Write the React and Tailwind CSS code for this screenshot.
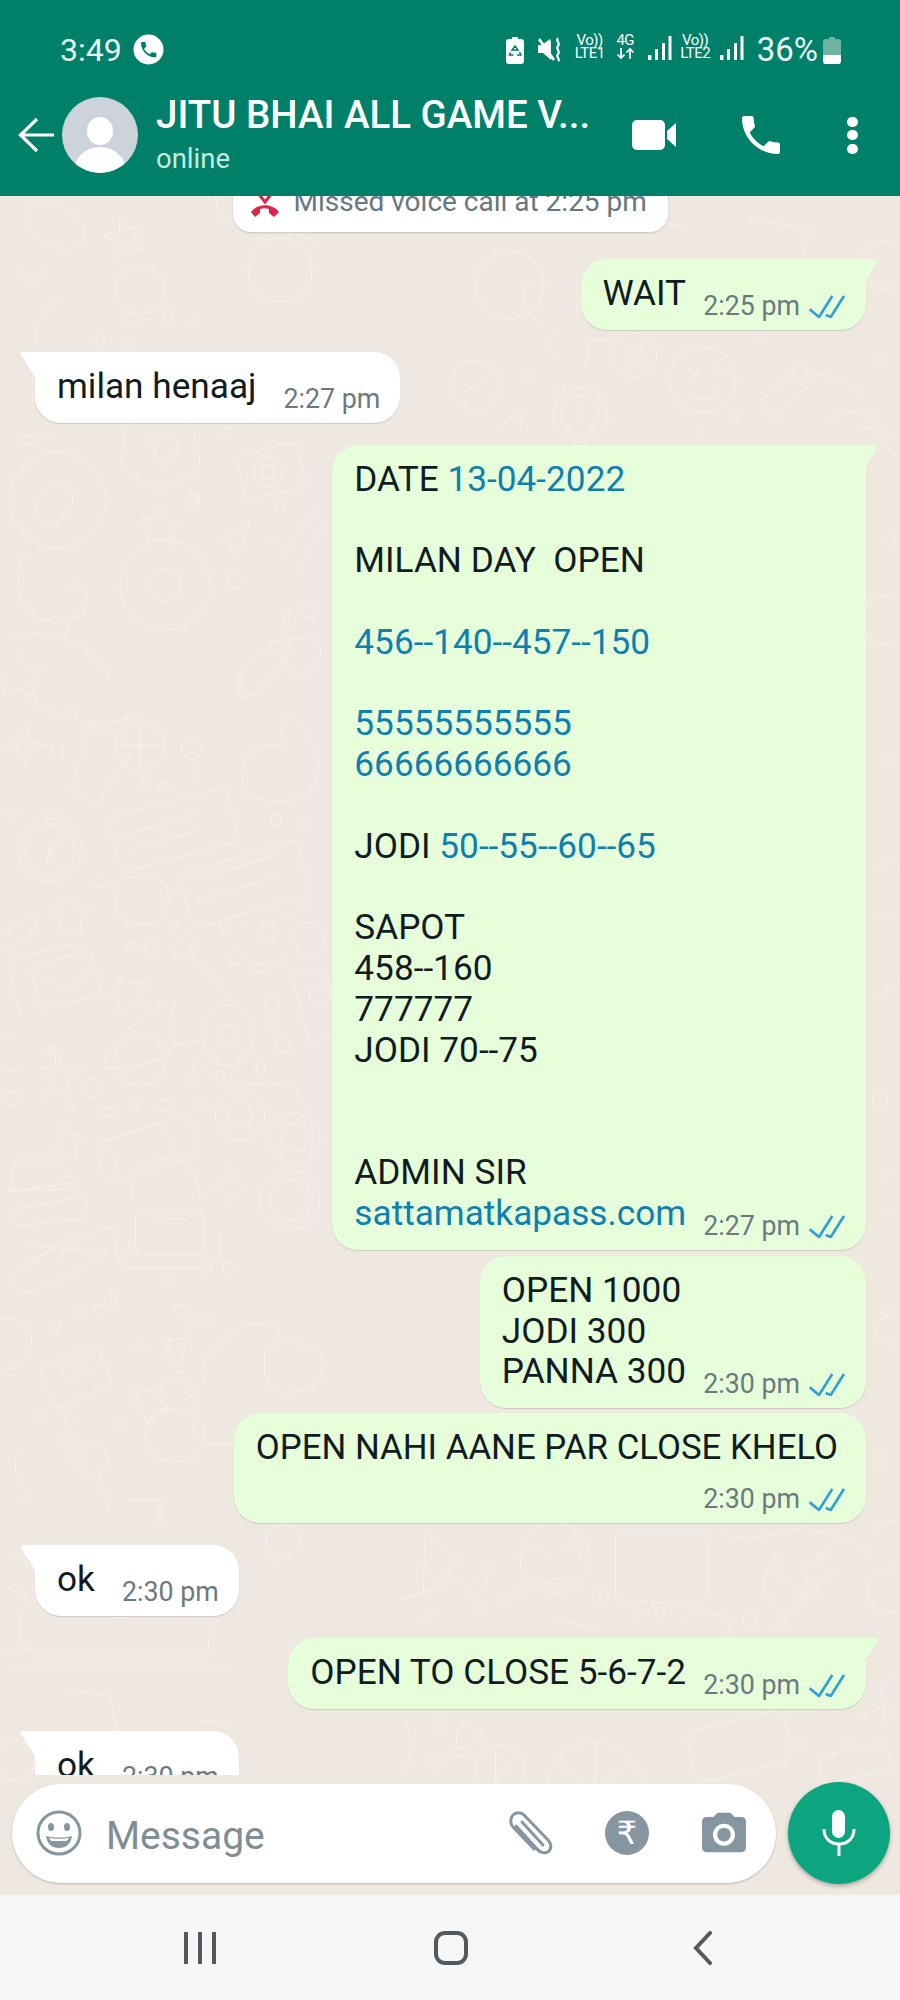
import React from "react";

const Link = ({ children }) => <span className="text-[#0f7fb0]">{children}</span>;

function Checks() {
  return (
    <svg width="37" height="24" viewBox="0 0 37 24" fill="none" stroke="#2f9fd8" strokeWidth="2.6" className="ml-[9px] shrink-0">
      <path d="M.7 15.3 10 23 23.3 2" />
      <path d="M16.7 21l5 2L35 2" />
    </svg>
  );
}

function Time({ t, out }) {
  return (
    <div className="flex h-[30px] items-center shrink-0 text-[26.800px] leading-[30px] text-[#6c7a7f] whitespace-nowrap">
      <span>{t}</span>
      {out && <Checks />}
    </div>
  );
}

function Bubble({ out, tail, time, stacked, className = "", children }) {
  const bg = out ? "bg-[#e6ffda]" : "bg-white";
  const corner = tail ? (out ? "rounded-tr-none" : "rounded-tl-none") : "";
  const side = out ? "self-end mr-[34px]" : "self-start ml-[35px]";
  const gap = out ? "mr-[17px]" : "mr-[27px]";
  return (
    <div className={`relative shrink-0 rounded-[26px] ${corner} ${bg} ${side} pl-[22px] pr-[20px] pt-[14px] pb-[9px] shadow-[0_1px_1px_rgba(0,0,0,0.14)] ${className}`}>
      {tail && (
        <svg width="15" height="25" viewBox="0 0 15 25" className={`absolute top-0 ${out ? "right-[-13px]" : "left-[-15px]"}`}>
          {out ? (
            <path d="M0 0H11c2 0 3 1.500 2 3L0 25Z" fill="#e6ffda" />
          ) : (
            <path d="M15 0H3C1 0-.5 1.500 1 3L15 25Z" fill="#fff" />
          )}
        </svg>
      )}
      {stacked ? (
        <div className="flex flex-col">
          <div className="mr-[8px] whitespace-pre text-[34.800px] leading-[40.8px] text-[#111b21]">{children}</div>
          <div className="mt-[16px] self-end"><Time t={time} out={out} /></div>
        </div>
      ) : (
        <div className="flex items-end">
          <div className={`${gap} pb-[7px] whitespace-pre text-[35.200px] leading-[40.8px] text-[#111b21]`}>{children}</div>
          <Time t={time} out={out} />
        </div>
      )}
    </div>
  );
}

function Doodles() {
  const dots = [
    [71,714,6],[58,752,6],[145,785,5],[164,787,5],[12,815,5],[276,820,6],[305,822,6],[100,882,5],[173,925,5],[132,947,5],[152,947,6],[225,925,5],[243,925,2],[268,932,10],[307,902,5],[290,915,3],
    [235,958,7],[260,968,5],[282,963,4],[272,1006,8],[270,1025,4],[283,1045,8],[198,1068,5],[220,1076,5],[192,1082,5],[261,1068,5],[12,1098,7],[91,1088,9],[108,1112,5],[134,1105,5],[165,1105,6],[200,1102,6],
    [132,1250,6],[110,1300,6],[55,1325,5],[83,1312,5],[100,1310,5],[180,1310,5],[140,1345,5],[207,1268,5],[229,1268,6],[171,1280,4],[190,1323,5],[208,1322,5],[180,1378,6],[190,1390,5],[42,1418,5],[70,1420,5],[122,1422,6],[67,1440,8],[82,1455,6],
    [130,320,7],[168,316,5],[195,323,4],[100,340,5],[130,345,4],[227,432,5],[28,440,5],[50,437,3],[192,500,6],[195,498,5],[280,507,5],[290,620,6],[270,540,4],[235,580,8],[275,646,6],[310,610,8],
    [50,1050,3],[482,1580,5],[490,1570,5],[520,1590,4],[480,1608,6],[505,1600,4],[600,1596,8],[660,1612,5],[778,1560,5],[820,1558,4],[810,1590,8],[750,1620,7],[780,1625,5],[440,1725,6],[478,1735,5],[437,1760,8],[460,1752,5],[850,1745,6],[800,1745,5],
    [530,375,5],[580,305,4],[650,335,5],[760,335,4],[845,300,5],[880,288,5],[800,370,8],[700,430,4],[560,390,4],[610,420,4],[735,418,5],[880,360,6],[890,540,5],[885,760,5],[880,1100,7],[885,1310,5],[880,1460,6],
  ];
  const S = "#f4eee7";
  return (
    <svg viewBox="0 196 900 1699" width="900" height="1699" fill="none" stroke={S} strokeWidth="1.5" strokeLinejoin="round" strokeLinecap="round" className="absolute inset-0 pointer-events-none">
      {dots.map(([x, y, r], i) => <circle key={i} cx={x} cy={y} r={r} />)}

      {/* top-left row */}
      <ellipse cx="55" cy="225" rx="32" ry="20" transform="rotate(30 55 225)" />
      <path d="M120 215l8 14 15-4-9 12 8 14-15-5-10 12 1-16-14-6 15-4Z" />
      <path d="M258 240c18-12 40-10 58 4" /><circle cx="280" cy="270" r="32" />
      <path d="M20 270l12 20 12-20M60 300c-20 10-30 30-22 45" />
      <circle cx="140" cy="290" r="24" /><circle cx="240" cy="200" r="24" />

      {/* milan zone */}
      <circle cx="58" cy="500" r="48" /><ellipse cx="55" cy="503" rx="16" ry="22" transform="rotate(35 55 503)" />
      <path d="M125 445c-8-22 18-32 30-24 18-14 44 0 38 22 14 14 4 36-14 36-12 16-36 10-40-4-16 0-24-18-14-30Z" />
      <path d="M150 440c8-12 20 0 12 0 10-8 22 4 14 14l-14 12Z" />
      <rect x="240" y="448" width="62" height="46" rx="7" transform="rotate(-12 270 470)" /><circle cx="268" cy="472" r="15" /><circle cx="268" cy="472" r="7" />
      <path d="M160 510l10 12 12 2-10 8 2 14-14-8-12 6 2-14-8-10 12-2Z" />
      <path d="M220 540l30-20-12 40-6-14Z" />
      <path d="M280 560l35-50M296 572l30-50" />
      <circle cx="165" cy="585" r="45" /><circle cx="165" cy="585" r="16" />
      <path d="M25 555c-12 20-10 50 12 62 20 12 50 4 50-20 0-14-12-14-22-12" />
      <path d="M90 600c-20 10-25 30-25 50M10 640c40-20 90 10 100 40M20 690c30 30 80 40 120 25" />
      <path d="M15 650l12 16 16 2-12 12 4 18-16-10-16 8 4-18" />
      <path d="M240 670l30-24 22-10-6 24-30 34-16 4Z" />
      <path d="M300 640c12-12 28 8 18 20l-18 18-16-16c-8-10 6-26 16-22Z" />

      {/* glass, thumb, compass, chat */}
      <path d="M90 724l45 24-40 57-24-16Z" />
      <circle cx="140" cy="745" r="25" /><path d="M140 725v40M120 745h40" />
      <path d="M25 725l6 16 14 4-14 6-5 16-6-16-14-4 14-6Z" />
      <path d="M270 745h14c-4-8-4-20 4-32 16 12 24 30 30 40 4 30-6 48-40 48-16 0-34-4-36-16-2-22 4-36 28-40Z" />
      <circle cx="192" cy="748" r="10" /><path d="M192 760l8 20" />
      <circle cx="50" cy="850" r="32" /><circle cx="50" cy="850" r="25" /><circle cx="51" cy="816" r="8" /><path d="M60 835l-14 30 5-20Z" />
      <rect x="112" y="802" width="122" height="56" rx="6" transform="rotate(-15 172 828)" />
      <path d="M125 835l75-22M130 850l70-20" />
      <rect x="183" y="856" width="122" height="56" rx="6" transform="rotate(-17 245 880)" />
      <path d="M195 880l85-26M198 900l80-24" />
      <path d="M116 902c-8-18 8-28 20-24 14-8 34 2 32 20 2 18-14 30-30 26-12 0-24-8-22-22Z" />
      <path d="M60 905l12-10 6 12 12 4-10 10 2 14-12-6-12 6 2-14-8-10Z" />
      <path d="M0 935l30-18c10 4 8 12 4 16L0 952" />
      <path d="M170 950l20-18c6 6 8 14 2 18l-16 10ZM190 955c16 10 30 30 40 44" />
      <path d="M300 925c8-8 26 2 24 16s-16 18-24 10-12-20 0-26Z" />
      <path d="M10 960l60-16c6 0 4 8 6 14M8 965l12 50" />
      <rect x="35" y="958" width="62" height="45" rx="5" transform="rotate(-15 65 980)" />
      <path d="M33 972l34 18 30-24" />
      <path d="M120 975l12 8 14 0-6 12 6 12-14-2-12 8-2-12-10-6 12-8Z" />
      <rect x="300" y="970" width="34" height="70" rx="4" transform="rotate(-14 317 1005)" /><circle cx="320" cy="995" r="10" />
      <path d="M105 1068c-8-20 60-70 70-68-2 12-8 22-2 36 8 20-26 32-68 32Z" /><circle cx="140" cy="1060" r="26" />
      <ellipse cx="228" cy="1035" rx="26" ry="30" /><circle cx="228" cy="1035" r="10" />
      <path d="M175 1045l30-6" />
      <path d="M55 1045l8 28 22-5-18 15 6 26-16-20-14 8 8-18-12-12 16 2Z" />
      <path d="M10 1035a18 18 0 1 0 10 34" />
      <path d="M65 1120l8 14 14 4-12 8 2 14-12-8-12 6 4-14Z" />
      <path d="M226 1088c40-8 60-4 70 0 14 20 20 40 14 70" />
      <circle cx="240" cy="1115" r="25" /><circle cx="240" cy="1115" r="13" /><circle cx="295" cy="1138" r="25" /><circle cx="295" cy="1138" r="14" />
      <rect x="98" y="1128" width="100" height="42" rx="14" transform="rotate(-18 148 1150)" />
      <path d="M110 1148l12 34M165 1130l16 34" />
      <path d="M132 1200c-4-22 8-40 30-42 24 0 38 20 38 42" />
      <path d="M230 1165l6 16 12 6-12 6-6 14-6-14-12-6 12-6Z" />
      <path d="M15 1160h42l18 22-66 10ZM10 1190h70" />
      <circle cx="290" cy="1200" r="30" /><circle cx="290" cy="1200" r="20" />

      {/* lower left */}
      <path d="M10 1210l65-12c18-4 15 24-5 22l-55 6ZM30 1245l60 6" />
      <rect x="135" y="1210" width="70" height="45" rx="7" />
      <path d="M120 1230c-10 20-5 40 20 38h60c20 0 22-18 20-36" />
      <path d="M155 1225c6-8 16-6 30-6" />
      <path d="M8 1290c8-30 40-36 60-50 30-8 40-16 50-10 4 20-50 50-100 65" />
      <path d="M30 1270c8-16 20-20 30-20M55 1265c6-12 12-18 20-20" />
      <rect x="45" y="1355" width="62" height="44" rx="5" transform="rotate(-25 75 1377)" />
      <path d="M60 1370l34-14M64 1382l30-14" />
      <path d="M0 1320c18-6 36 10 30 30-10 24-30 20-30 20" />
      <path d="M168 1340l18-2-3 18c-2 8-14 6-15-1ZM186 1335l6 10" />
      <path d="M135 1385l14 6 14-8-4 16 10 10-14 2-8 12-6-14-12-6 10-6Z" />
      <path d="M200 1400c-8 12-12 28-2 38 12 10 40 6 52 0" />
      <ellipse cx="175" cy="1436" rx="30" ry="26" />
      <path d="M220 1342c14-18 40-24 60-12" /><path d="M205 1385c-8-18 4-32 16-44" />
      <path d="M265 1360c-6-16 28-26 38-14 14-2 24 10 18 24 4 14-12 24-24 20-14 8-36-2-32-30Z" />
      <path d="M72 1462c-8-8 6-24 18-14 12-8 24 4 16 18l-16 14Z" />
      <path d="M15 1480l14 14-14 12M20 1450c-8 10-6 24 2 32" />
      <path d="M100 1470c-2 10 8 30 8 40M130 1500h30v26" />
      <path d="M20 1640c0-12 0-30 8-40h180c4 20 4 40-4 62H40Z" />
      <circle cx="120" cy="1590" r="28" /><path d="M108 1615c4 4 24 6 30-6" />
      <path d="M5 1650h210M10 1670h220" />
      <path d="M240 1510l30-34 10-2-4 14-28 30ZM270 1530c10-12 30-6 30 8 0 16-12 18-24 24-8-8-16-22-6-32Z" />
      <path d="M10 1560c6-8 18-4 16 8M8 1590c6-8 18-4 16 8" />
      <circle cx="15" cy="1760" r="20" /><path d="M70 1750l10 15 10-15" />
      <path d="M70 1690l40 6 8 40M200 1720l30 4" />

      {/* right column */}
      <circle cx="885" cy="265" r="24" /><path d="M870 420c10 20 20 30 30 40" />
      <circle cx="885" cy="620" r="24" /><path d="M875 870c8-10 20-8 25-2M875 920l25-8M872 1000l28-18" />
      <path d="M880 1180c4-10 20-14 30-8M880 1210h30" /><circle cx="890" cy="1330" r="14" />
      <path d="M875 1530c5-10 16-10 25-8" /><circle cx="890" cy="1590" r="22" /><path d="M880 1700c0-14 10-26 24-26" />

      {/* top middle */}
      <circle cx="703" cy="380" r="33" /><path d="M688 368l10 6-10 4M712 365l8 8 8-4M690 393c10 10 24 8 30-4" />
      <circle cx="580" cy="415" r="27" /><circle cx="580" cy="415" r="19" /><path d="M582 400v22" />
      <circle cx="635" cy="355" r="22" /><path d="M625 350h20M625 360h20" />
      <path d="M590 340l-5 30M590 340h24" />
      <path d="M450 380c4-20 30-26 46-10 8 16 0 36-16 44-16-6-32-16-30-34Z" />
      <path d="M465 385l10 6 8-14M530 280c-10 14-6 34 10 44M555 330l-10 20 14 4" />
      <path d="M500 430l8-12 14-4-2 18" /><circle cx="510" cy="285" r="34" />
      <path d="M760 400l40-34 18 8-44 46ZM820 375c14 0 34 10 44 24M830 420c16-10 36-14 50 0" />
      <path d="M640 270c20-6 44-8 64-4M660 295l70-15M770 290l70-12" />
      <path d="M605 228c24-10 50-10 80 0M750 220l60 8-14 50" />
      <path d="M895 440c-10-14-30-14-40-8" />

      {/* bottom middle */}
      <circle cx="555" cy="1558" r="35" /><path d="M530 1553c4-14 16-6 16 6M565 1550c6-14 18-4 14 8M535 1575c12 12 28 12 38 0" />
      <path d="M425 1535l36 24-38 36Z" />
      <rect x="615" y="1530" width="92" height="72" rx="10" />
      <path d="M640 1602l-4 18 22-18" />
      <path d="M725 1535c20 6 50 2 90-12M810 1530c30 6 50 14 60 24" />
      <path d="M770 1600c-18-30 0-30 20-20 20 20 10 30-6 40ZM800 1570l28-20M810 1590l24-20M800 1600l30-24" />
      <path d="M400 1600l60-20 20 26M420 1620l14-6" />
      <path d="M555 1625c8-8 30 2 40 4" />
      <path d="M680 1625c6-14 22-20 34-10 14-6 22 10 12 22" />
      <circle cx="500" cy="1770" r="25" /><path d="M495 1752l16 16-16 14Z" />
      <circle cx="595" cy="1790" r="48" /><path d="M595 1742v48M555 1760l40 30M635 1760l-40 30" />
      <rect x="690" y="1720" width="100" height="52" rx="12" transform="rotate(-14 740 1746)" />
      <path d="M470 1720c-14 4-18 20-8 30M405 1720c8 20 6 40 0 50" />
      <rect x="820" y="1750" width="70" height="28" rx="5" transform="rotate(-12 850 1765)" />
      <path d="M860 1720c10-14 30-12 40-2M880 1700c8 10 6 20 0 30" />
    </svg>
  );
}

function StatusBar() {
  return (
    <div className="flex h-[95px] items-start pl-[60px] pt-[34px] text-white">
      <span className="text-[32px] leading-[32px] text-[#eaf6f2]">3:49</span>
      <svg width="31" height="31" viewBox="0 0 31 31" className="ml-[11px]">
        <circle cx="15.5" cy="15.500" r="15" fill="#fff" />
        <g transform="translate(5.500 5.500) scale(.85)">
          <path fill="#008069" d="M6.620 10.790c1.440 2.830 3.760 5.140 6.590 6.590l2.200-2.200c.270-.270.670-.360 1.020-.240 1.120.370 2.330.570 3.570.570.550 0 1 .450 1 1V20c0 .550-.450 1-1 1-9.390 0-17-7.610-17-17 0-.550.450-1 1-1h3.500c.550 0 1 .450 1 1 0 1.250.200 2.450.570 3.570.110.350.030.740-.250 1.020l-2.200 2.200z" />
        </g>
      </svg>

      <div className="ml-[342px] flex items-start">
        <svg width="18" height="27" viewBox="0 0 18 27" className="mt-[3px]">
          <path fill="#fff" d="M6 0h6v2h3a3 3 0 0 1 3 3v19a3 3 0 0 1-3 3H3a3 3 0 0 1-3-3V5a3 3 0 0 1 3-3h3Z" />
          <path fill="none" stroke="#008069" strokeWidth="1.500" d="M9 9l3 4H6ZM4.500 15.500l-1 2.500h4M13.500 15l1.500 3h-4" />
        </svg>
        <svg width="26" height="25" viewBox="0 0 26 25" className="ml-[14px] mt-[3px]">
          <path fill="#fff" d="M0 8h4l8-6 1 3v15L3 6h0L13 20v3l-8-7H0Z" />
          <path fill="#fff" d="M0 3l2-2 15 21-2 2Z" />
          <path fill="none" stroke="#fff" strokeWidth="2.200" d="M20 1c-3 3 3 5 0 8s3 5 0 8 3 5 0 7" />
        </svg>
        <div className="ml-[10px] flex w-[32px] flex-col items-center text-[15px] leading-[13px] text-white">
          <span className="tracking-[-0.5px]">Vo))</span>
          <span className="tracking-[-0.5px]">LTE1</span>
        </div>
        <div className="ml-[10px] flex w-[19px] flex-col items-center text-[15px] leading-[13px] text-white">
          <span className="tracking-[-0.5px]">4G</span>
          <svg width="19" height="13" viewBox="0 0 19 13" fill="none" stroke="#fff" strokeWidth="1.700">
            <path d="M5 1v10M1.500 7.500 5 11l3.500-3.500M14 12V2M10.500 5.500 14 2l3.500 3.500" />
          </svg>
        </div>
        <svg width="24" height="26" viewBox="0 0 24 26" fill="#fff" className="ml-[13px] mt-[1px]">
          <rect x="0" y="20" width="3.500" height="5" /><rect x="7" y="14" width="3" height="11" /><rect x="14" y="8" width="3" height="17" /><rect x="20.500" y="1" width="3" height="24" />
        </svg>
        <div className="ml-[6px] flex w-[35px] flex-col items-center text-[15px] leading-[13px] text-white">
          <span className="tracking-[-0.5px]">Vo))</span>
          <span className="tracking-[-0.5px]">LTE2</span>
        </div>
        <svg width="24" height="26" viewBox="0 0 24 26" fill="#fff" className="ml-[7px] mt-[1px]">
          <rect x="0" y="20" width="3.500" height="5" /><rect x="7" y="14" width="3" height="11" /><rect x="14" y="8" width="3" height="17" /><rect x="20.500" y="1" width="3" height="24" />
        </svg>
        <span className="ml-[13px] text-[33px] leading-[32px] text-[#eaf6f2]">36%</span>
        <svg width="18" height="27" viewBox="0 0 18 27" className="ml-[5px] mt-[3px]">
          <path fill="#6fb3a3" d="M6 0h6v2h3a3 3 0 0 1 3 3v19a3 3 0 0 1-3 3H3a3 3 0 0 1-3-3V5a3 3 0 0 1 3-3h3Z" />
          <path fill="#fff" d="M0 18h18v6a3 3 0 0 1-3 3H3a3 3 0 0 1-3-3Z" />
        </svg>
      </div>
    </div>
  );
}

function Header() {
  return (
    <header className="h-[196px] shrink-0 bg-[#008069]">
      <StatusBar />
      <div className="flex h-[80px] items-center pl-[18px]">
        <svg width="36" height="36" viewBox="0 0 36 36" fill="none" stroke="#fff" strokeWidth="3.200" className="shrink-0">
          <path d="M36 18H3M19 2 2.500 18 19 34" />
        </svg>
        <svg width="76" height="76" viewBox="0 0 76 76" className="ml-[8px] shrink-0">
          <circle cx="38" cy="38" r="38" fill="#ccd3da" />
          <clipPath id="av"><circle cx="38" cy="38" r="38" /></clipPath>
          <g clipPath="url(#av)" fill="#fff">
            <ellipse cx="38" cy="34" rx="13" ry="14" />
            <ellipse cx="38" cy="74" rx="26" ry="24" />
          </g>
        </svg>
        <div className="ml-[18px] flex h-full w-[470px] shrink-0 flex-col">
          <span className="whitespace-nowrap text-[38.500px] font-medium leading-[40px] text-white">JITU BHAI ALL GAME V...</span>
          <span className="mt-[8px] text-[27.500px] leading-[32px] text-[#c3ece0]">online</span>
        </div>
        <svg width="45" height="30" viewBox="0 0 45 30" fill="#fff" className="ml-[6px] shrink-0">
          <rect x="0" y="0" width="33" height="30" rx="5" />
          <path d="M35 11 44 3v24l-9-8Z" />
        </svg>
        <svg width="38" height="38" viewBox="3 3 18 18" fill="#fff" className="ml-[65px] shrink-0">
          <path d="M6.620 10.790c1.440 2.830 3.760 5.140 6.590 6.590l2.200-2.200c.270-.270.670-.360 1.020-.240 1.120.370 2.330.570 3.570.570.550 0 1 .450 1 1V20c0 .550-.450 1-1 1-9.390 0-17-7.610-17-17 0-.550.450-1 1-1h3.500c.550 0 1 .450 1 1 0 1.250.200 2.450.570 3.570.110.350.030.740-.250 1.020l-2.200 2.200z" />
        </svg>
        <div className="ml-[67px] flex h-[37px] w-[11px] shrink-0 flex-col justify-between">
          <span className="h-[10px] w-[11px] rounded-full bg-white" />
          <span className="h-[10px] w-[11px] rounded-full bg-white" />
          <span className="h-[10px] w-[11px] rounded-full bg-white" />
        </div>
      </div>
    </header>
  );
}

function Composer() {
  const G = "#8696a0";
  return (
    <div className="relative flex shrink-0 items-center pb-[11px] pl-[12px] pt-[7px]">
      <div className="flex h-[99px] w-[764px] items-center rounded-[50px] bg-white pl-[24px] pr-[30px] shadow-[0_1px_2px_rgba(0,0,0,0.22)]">
        <svg width="46" height="46" viewBox="0 0 46 46" fill="none" stroke={G} strokeWidth="3" className="shrink-0">
          <circle cx="23" cy="23" r="21" />
          <ellipse cx="15" cy="17" rx="3" ry="4" fill={G} stroke="none" />
          <ellipse cx="31" cy="17" rx="3" ry="4" fill={G} stroke="none" />
          <path d="M10 26c7 2 19 2 26 0-1 8-6 12-13 12s-12-4-13-12Z" fill={G} stroke="none" />
          <path d="M13 28c6 1 14 1 20 0-1 2-2 3-3 3H16c-1 0-2-1-3-3Z" fill="#fff" stroke="none" />
        </svg>
        <span className="ml-[24px] mt-[6px] text-[39px] leading-[44px] text-[#7f8d95]">Message</span>
        <svg width="46" height="44" viewBox="0 0 46 44" fill="none" stroke={G} strokeWidth="3" strokeLinecap="round" className="ml-auto shrink-0">
          <path d="M8 14 29 37c3 4 9 5 12 2s2-8-1-11L17 4C14 0 8 0 5 3s-3 9 0 12l21 22" transform="translate(0 1)" />
          <path d="M14 11l21 23" />
        </svg>
        <div className="ml-[51px] flex h-[44px] w-[44px] shrink-0 items-center justify-center rounded-full bg-[#8696a0]">
          <span className="text-[32px] font-medium leading-[44px] text-white" style={{ fontFamily: "'DejaVu Sans', sans-serif" }}>₹</span>
        </div>
        <svg width="44" height="42" viewBox="2 2 20 18.500" className="ml-[53px] shrink-0">
          <path fill={G} fillRule="evenodd" d="M9 2 7.170 4H4c-1.100 0-2 .9-2 2v12c0 1.100.9 2 2 2h16c1.100 0 2-.9 2-2V6c0-1.100-.9-2-2-2h-3.170L15 2H9Zm3 15c-2.760 0-5-2.240-5-5s2.240-5 5-5 5 2.240 5 5-2.240 5-5 5Zm0-1.900a3.100 3.100 0 1 0 0-6.200 3.100 3.100 0 0 0 0 6.200Z" />
        </svg>
      </div>
      <div className="ml-[12px] flex h-[102px] w-[102px] shrink-0 items-center justify-center rounded-full bg-[#0ca57f] shadow-[0_2px_4px_rgba(0,0,0,0.3)]">
        <svg width="34" height="46" viewBox="0 0 34 46" fill="none" stroke="#fff">
          <rect x="10" y="0" width="13" height="28" rx="6.500" fill="#fff" stroke="none" />
          <path d="M2 19c0 9 6 15 15 15s15-6 15-15M17 34v12" strokeWidth="3" />
        </svg>
      </div>
    </div>
  );
}

function NavBar() {
  return (
    <nav className="flex h-[105px] shrink-0 items-center bg-[#f5f7f9] pl-[184px]">
      <div className="flex h-[32px] w-[32px] justify-between">
        <span className="h-full w-[4px] bg-[#54595d]" />
        <span className="h-full w-[4px] bg-[#54595d]" />
        <span className="h-full w-[4px] bg-[#54595d]" />
      </div>
      <div className="ml-[218px] h-[34px] w-[34px] rounded-[11px] border-[4px] border-[#54595d]" />
      <svg width="20" height="34" viewBox="0 0 20 34" fill="none" stroke="#54595d" strokeWidth="4" strokeLinecap="round" className="ml-[225px]">
        <path d="M17 2 3 17l14 15" />
      </svg>
    </nav>
  );
}

export default function App() {
  return (
    <div className="flex h-[2000px] w-[900px] flex-col overflow-hidden bg-white" style={{ fontFamily: "Roboto, 'Noto Sans', sans-serif" }}>
      <Header />
      <main className="relative flex min-h-0 flex-1 flex-col bg-[#efe8e0]">
        <Doodles />
        <div className="relative flex min-h-0 flex-1 flex-col overflow-hidden">
          <div className="mt-[-35px] flex h-[71px] w-[435px] shrink-0 items-center self-center rounded-[18px] bg-white pl-[17px] shadow-[0_1px_2px_rgba(0,0,0,0.16)]">
            <svg width="30" height="30" viewBox="0 0 30 30" className="mt-[14px] shrink-0">
              <path fill="#e0244b" d="M1 23c6-9 22-9 28 0l-5 5-5-4v-4c-3-1-6-1-9 0v4l-5 4Z" />
              <path fill="none" stroke="#e0244b" strokeWidth="3" d="M8 4l7 9 7-9" />
            </svg>
            <span className="ml-[14px] mt-[10px] whitespace-nowrap text-[28px] leading-[36px] text-[#667781]">Missed voice call at 2:25 pm</span>
          </div>

          <div className="mt-[27px] flex flex-col">
            <Bubble out tail time="2:25 pm">WAIT</Bubble>
          </div>
          <Bubble tail time="2:27 pm" className="mt-[22px]">milan henaaj</Bubble>
          <Bubble out tail time="2:27 pm" className="mt-[22px]">
            {"DATE "}<Link>13-04-2022</Link>{"\n\nMILAN DAY  OPEN\n\n"}<Link>456--140--457--150</Link>{"\n\n"}<Link>{"55555555555\n66666666666"}</Link>{"\n\nJODI "}<Link>50--55--60--65</Link>{"\n\nSAPOT\n458--160\n777777\nJODI 70--75\n\n\nADMIN SIR\n"}<Link>sattamatkapass.com</Link>
          </Bubble>
          <Bubble out time="2:30 pm" className="mt-[6px]">{"OPEN 1000\nJODI 300\nPANNA 300"}</Bubble>
          <Bubble out stacked time="2:30 pm" className="mt-[5px]">OPEN NAHI AANE PAR CLOSE KHELO</Bubble>
          <Bubble tail time="2:30 pm" className="mt-[22px]">ok</Bubble>
          <Bubble out tail time="2:30 pm" className="mt-[22px]">OPEN TO CLOSE 5-6-7-2</Bubble>
          <Bubble tail time="2:30 pm" className="mt-[22px]">ok</Bubble>
        </div>
        <Composer />
      </main>
      <NavBar />
    </div>
  );
}
